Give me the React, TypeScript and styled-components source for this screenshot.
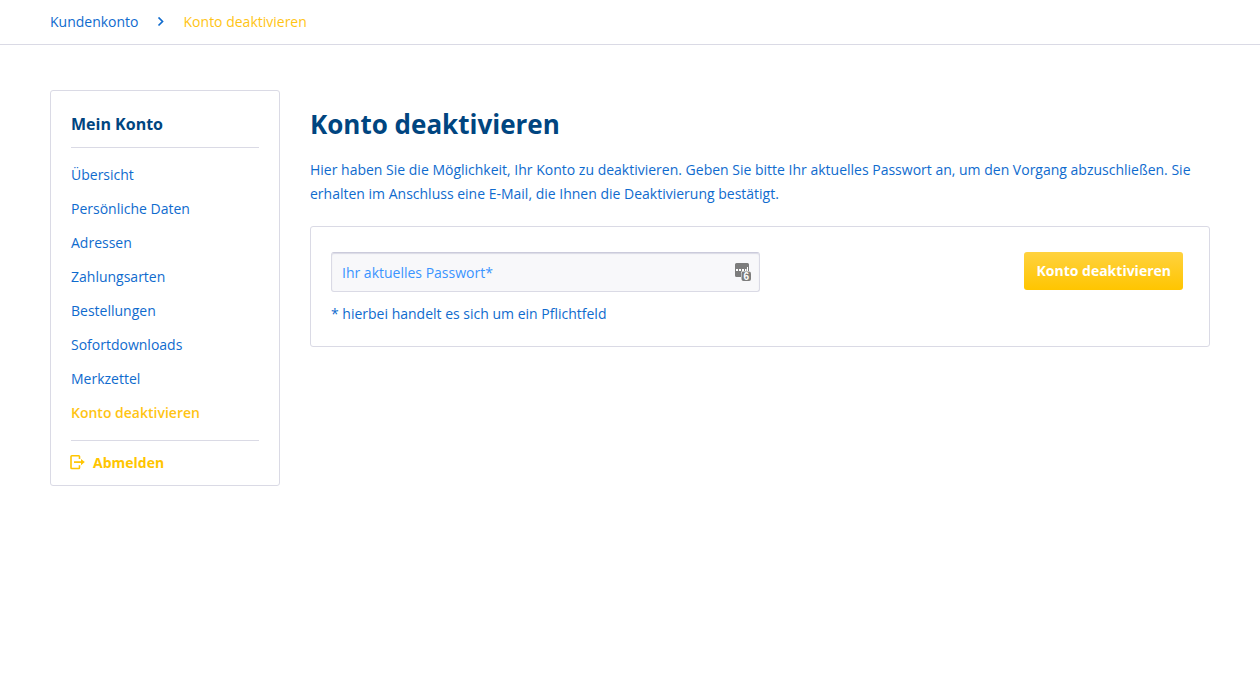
import React from "react";
import styled, { createGlobalStyle } from "styled-components";

const blue = "#0f6bce";
const navy = "#004580";
const yellow = "#ffc414";
const line = "#dadae5";

const GlobalStyle = createGlobalStyle`
  *, *::before, *::after { box-sizing: border-box; }
  body {
    margin: 0;
    background: #fff;
    color: ${blue};
    font: 400 14px/24px "Open Sans", sans-serif;
  }
`;

const Breadcrumb = styled.nav`
  border-bottom: 1px solid ${line};
  padding: 10px 50px;
`;

const Crumbs = styled.ol`
  display: flex;
  align-items: center;
  gap: 18px;
  margin: 0;
  padding: 0;
  list-style: none;
`;

const Crumb = styled.li`
  display: flex;
  align-items: center;
  gap: 18px;
`;

const CrumbLink = styled.a<{ $active?: boolean }>`
  color: ${(p) => (p.$active ? yellow : blue)};
  text-decoration: none;
`;

const Page = styled.div`
  display: flex;
  align-items: flex-start;
  gap: 30px;
  padding: 45px 50px;
`;

const Sidebar = styled.aside`
  flex: 0 0 230px;
  border: 1px solid ${line};
  border-radius: 3px;
  padding: 21px 20px 10px;
`;

const SidebarTitle = styled.h2`
  margin: 0 0 10px;
  padding-bottom: 11px;
  border-bottom: 1px solid ${line};
  color: ${navy};
  font-size: 16px;
  font-weight: 700;
  line-height: 24px;
`;

const Menu = styled.ul`
  margin: 0;
  padding: 0 0 10px;
  border-bottom: 1px solid ${line};
  list-style: none;
`;

const MenuLink = styled.a<{ $active?: boolean }>`
  display: block;
  color: ${(p) => (p.$active ? yellow : blue)};
  font-weight: ${(p) => (p.$active ? 600 : 400)};
  line-height: 34px;
  text-decoration: none;
`;

const Logout = styled.a`
  display: flex;
  align-items: center;
  gap: 8px;
  padding-top: 10px;
  color: #ffc500;
  font-weight: 700;
  text-decoration: none;
`;

const Main = styled.main`
  flex: 1;
  min-width: 0;
  padding-top: 18px;
`;

const Title = styled.h1`
  margin: 0 0 18px;
  color: ${navy};
  font-size: 26px;
  font-weight: 700;
  line-height: 32px;
`;

const Intro = styled.p`
  margin: 0 0 20px;
`;

const Panel = styled.form`
  display: flex;
  align-items: flex-start;
  justify-content: space-between;
  border: 1px solid ${line};
  border-radius: 3px;
  padding: 25px 26px 20px 20px;
`;

const FieldColumn = styled.div`
  flex: 0 1 429px;
`;

const Field = styled.div`
  position: relative;
  display: flex;
`;

const PasswordInput = styled.input`
  width: 100%;
  height: 40px;
  border: 1px solid ${line};
  border-top-color: #cbcbdb;
  border-radius: 3px;
  padding: 0 36px 0 10px;
  background: #f8f8fa;
  box-shadow: inset 0 1px 1px ${line};
  color: ${blue};
  font: inherit;

  &::placeholder {
    color: #3a94ff;
    opacity: 1;
  }
`;

const ManagerIcon = styled.svg`
  position: absolute;
  top: 10px;
  right: 8px;
`;

const Hint = styled.p`
  margin: 10px 0 0;
`;

const SubmitButton = styled.button`
  height: 38px;
  border: 0;
  border-radius: 3px;
  padding: 0 12px;
  background: linear-gradient(#ffd23f, #ffc500);
  color: #fff;
  font: inherit;
  font-weight: 700;
  line-height: 38px;
  cursor: pointer;
`;

const menu = [
  "Übersicht",
  "Persönliche Daten",
  "Adressen",
  "Zahlungsarten",
  "Bestellungen",
  "Sofortdownloads",
  "Merkzettel",
  "Konto deaktivieren",
];

export default function App() {
  return (
    <>
      <GlobalStyle />
      <Breadcrumb aria-label="Breadcrumb">
        <Crumbs>
          <Crumb>
            <CrumbLink href="#konto">Kundenkonto</CrumbLink>
            <svg width="9" height="10" viewBox="0 0 9 10" fill="none" aria-hidden="true">
              <path d="M1.500 0.500l4 4-4 4" stroke={blue} strokeWidth="1.7" />
            </svg>
          </Crumb>
          <Crumb>
            <CrumbLink href="#deaktivieren" $active aria-current="page">
              Konto deaktivieren
            </CrumbLink>
          </Crumb>
        </Crumbs>
      </Breadcrumb>
      <Page>
        <Sidebar>
          <SidebarTitle>Mein Konto</SidebarTitle>
          <Menu>
            {menu.map((label, i) => (
              <li key={label}>
                <MenuLink href={`#${i}`} $active={i === menu.length - 1}>
                  {label}
                </MenuLink>
              </li>
            ))}
          </Menu>
          <Logout href="#abmelden">
            <svg
              width="14"
              height="14"
              viewBox="0 0 14 14"
              fill="none"
              overflow="visible"
              aria-hidden="true"
            >
              <path
                d="M8.500 3V.5Q8.500-.3 7.700-.3H.8Q0-.3 0 .5V11.700Q0 12.500 .8 12.500H7.700Q8.500 12.500 8.500 11.700V9.200"
                stroke="currentColor"
                strokeWidth="1.6"
              />
              <path d="M3 6.100h8.500" stroke="currentColor" strokeWidth="1.7" />
              <path d="M10 2.900L13.800 6.100 10 9.300z" fill="currentColor" />
            </svg>
            Abmelden
          </Logout>
        </Sidebar>
        <Main>
          <Title>Konto deaktivieren</Title>
          <Intro>
            Hier haben Sie die Möglichkeit, Ihr Konto zu deaktivieren. Geben Sie bitte Ihr aktuelles
            Passwort an, um den Vorgang abzuschließen. Sie erhalten im Anschluss eine E-Mail, die
            Ihnen die Deaktivierung bestätigt.
          </Intro>
          <Panel onSubmit={(e) => e.preventDefault()}>
            <FieldColumn>
              <Field>
                <PasswordInput
                  type="password"
                  aria-label="Ihr aktuelles Passwort"
                  placeholder="Ihr aktuelles Passwort*"
                  required
                />
                <ManagerIcon width="18" height="20" viewBox="0 0 18 20" aria-hidden="true">
                  <path
                    d="M2.500 1H13.500Q15 1 15 2.500V9H9Q7 9 7 11V15H2.500Q1 15 1 13.500V2.500Q1 1 2.500 1z"
                    fill="#7d7d7d"
                  />
                  <path
                    d="M2 7h2v2H2zM5 7h2v2H5zM8 7h2v2H8zM11 7h1.500v2H11zM13 5h1v4h-1z"
                    fill="#fff"
                  />
                  <rect x="7.500" y="9.500" width="9.500" height="9.500" rx="2" fill="#7d7d7d" />
                  <text
                    x="12.200"
                    y="17.500"
                    textAnchor="middle"
                    fontFamily="Liberation Sans, sans-serif"
                    fontSize="10"
                    fontWeight="700"
                    fill="#fff"
                  >
                    6
                  </text>
                </ManagerIcon>
              </Field>
              <Hint>* hierbei handelt es sich um ein Pflichtfeld</Hint>
            </FieldColumn>
            <SubmitButton type="submit">Konto deaktivieren</SubmitButton>
          </Panel>
        </Main>
      </Page>
    </>
  );
}
